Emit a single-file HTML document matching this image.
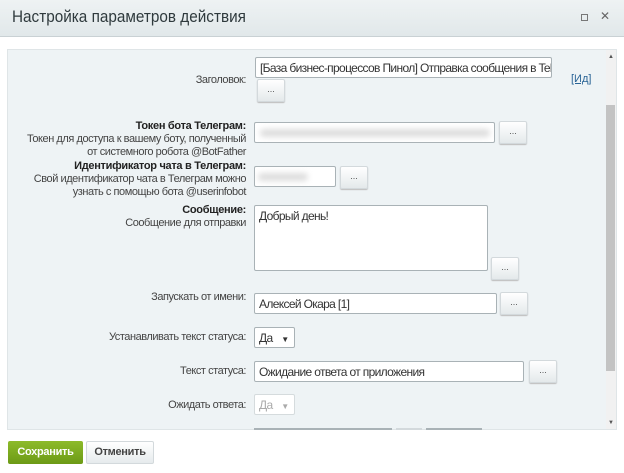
<!DOCTYPE html>
<html><head><meta charset="utf-8"><style>
*{box-sizing:border-box;margin:0;padding:0}
body{width:624px;height:473px;overflow:hidden;background:#fff;font-family:"Liberation Sans",Arial,sans-serif;color:#333;position:relative}
.hdr{position:absolute;left:0;top:0;width:624px;height:37px;background:linear-gradient(#eef2f3,#e1e8ea);border-bottom:1px solid #c9d1d4}
.hdr .t{position:absolute;left:12px;top:7px;font-size:17px;color:#2f3a3d;transform:scaleX(0.9);transform-origin:left}
.hdr .m{position:absolute;left:581px;top:14px;width:7px;height:7px;border:1px solid #777}
.hdr .x{position:absolute;left:600px;top:9px;font-size:12px;color:#666}
.panel{position:absolute;left:7px;top:49px;width:610px;height:381px;background:#eef3f5;border:1px solid #dfe5e7;overflow:hidden}
.sb{position:absolute;left:606px;top:50px;width:10px;height:379px;background:#f1f1f1}
.thumb{position:absolute;left:606px;top:105px;width:9px;height:266px;background:#c3c3c3}
.ar{position:absolute;font-size:6px;color:#555;left:608px}
.a{position:absolute}
.lbl{position:absolute;right:378px;text-align:right;font-size:11px;line-height:13px;color:#444;white-space:nowrap;letter-spacing:-0.45px}
.lbl b{color:#222;letter-spacing:-0.3px}
.in{position:absolute;background:#fff;border:1px solid #a9b2b6;border-radius:2px;font-size:12px;padding:3px 4px;color:#333;white-space:nowrap;overflow:hidden;height:21px;line-height:14px;letter-spacing:-0.65px}
.bt{position:absolute;width:28px;height:23px;background:linear-gradient(#fff,#e4e9eb);border:1px solid #d3d9dc;border-radius:2px;font-size:9px;color:#555;text-align:center;line-height:18px;box-shadow:0 1px 1px #bbb}
.blur{position:absolute;background:#ddd;filter:blur(3px);border-radius:6px;height:8px}
.btn{position:absolute;font-weight:bold;font-size:11px;text-align:center;border-radius:2px;letter-spacing:-0.3px}
</style></head><body>
<div class="hdr"><div class="t">Настройка параметров действия</div><div class="m"></div><div class="x">✕</div></div>
<div class="panel"></div>
<div class="sb"></div><div class="thumb"></div>
<div class="ar" style="top:54px">▲</div><div class="ar" style="top:420px">▼</div>

<div class="in" style="left:255px;top:57px;width:297px">[База бизнес-процессов Пинол] Отправка сообщения в Telegra</div>
<div class="lbl" style="top:74px">Заголовок:</div>
<div class="bt" style="left:257px;top:79px">...</div>
<div class="a" style="left:571px;top:73px;font-size:11px;color:#2a6496"><u>[Ид]</u></div>

<div class="lbl" style="top:120px"><b>Токен бота Телеграм:</b><br>Токен для доступа к вашему боту, полученный<br>от системного робота @BotFather</div>
<div class="in" style="left:254px;top:122px;width:241px"></div>
<div class="blur" style="left:260px;top:129px;width:230px"></div>
<div class="bt" style="left:499px;top:121px">...</div>

<div class="lbl" style="top:160px"><b>Идентификатор чата в Телеграм:</b><br>Свой идентификатор чата в Телеграм можно<br>узнать с помощью бота @userinfobot</div>
<div class="in" style="left:254px;top:166px;width:82px"></div>
<div class="blur" style="left:258px;top:173px;width:50px"></div>
<div class="bt" style="left:340px;top:166px">...</div>

<div class="lbl" style="top:204px"><b>Сообщение:</b><br>Сообщение для отправки</div>
<div class="in" style="left:254px;top:205px;width:234px;height:66px">Добрый день!</div>
<div class="bt" style="left:491px;top:257px">...</div>

<div class="lbl" style="top:291px">Запускать от имени:</div>
<div class="in" style="left:254px;top:293px;width:243px;height:21px">Алексей Окара [1]</div>
<div class="bt" style="left:500px;top:292px">...</div>

<div class="lbl" style="top:331px">Устанавливать текст статуса:</div>
<div class="in" style="left:254px;top:327px;width:41px">Да <span style="font-size:8px;margin-left:6px">▼</span></div>

<div class="lbl" style="top:365px">Текст статуса:</div>
<div class="in" style="left:254px;top:361px;width:270px">Ожидание ответа от приложения</div>
<div class="bt" style="left:529px;top:360px">...</div>

<div class="lbl" style="top:399px">Ожидать ответа:</div>
<div class="in" style="left:254px;top:394px;width:41px;color:#aaa;border-color:#d5dbdd">Да <span style="font-size:8px;margin-left:6px">▼</span></div>

<div class="a" style="left:254px;top:428px;width:138px;height:2px;background:#a9b2b6"></div>
<div class="a" style="left:396px;top:428px;width:26px;height:2px;background:#d3d9dc"></div>
<div class="a" style="left:426px;top:428px;width:56px;height:2px;background:#a9b2b6"></div>

<div class="btn" style="left:8px;top:441px;width:75px;height:23px;background:linear-gradient(#8dbb2a,#6c9a16);color:#fff;line-height:23px">Сохранить</div>
<div class="btn" style="left:86px;top:441px;width:68px;height:23px;background:linear-gradient(#fff,#e6ebed);border:1px solid #d3d9dc;color:#444;line-height:21px">Отменить</div>
</body></html>
